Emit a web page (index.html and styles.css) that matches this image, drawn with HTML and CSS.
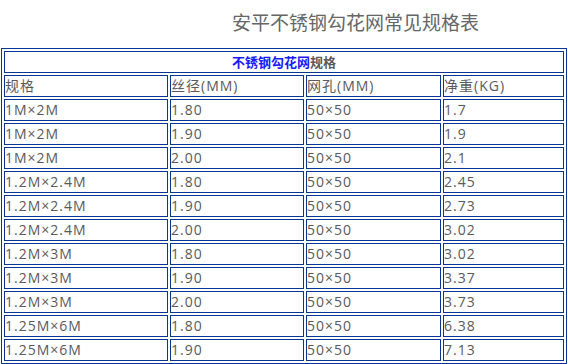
FILE: index.html
```html
<!DOCTYPE html>
<html lang="zh-CN">
<head>
<meta charset="utf-8">
<title>安平不锈钢勾花网常见规格表</title>
<link rel="stylesheet" href="styles.css">
</head>
<body>
<h1 class="title">安平不锈钢勾花网常见规格表</h1>
<table class="spec">
  <tr>
    <td class="caption" colspan="4"><span class="blue">不锈钢勾花网</span>规格</td>
  </tr>
  <tr>
    <td class="c1">规格</td>
    <td class="c2">丝径(MM)</td>
    <td class="c3">网孔(MM)</td>
    <td class="c4">净重(KG)</td>
  </tr>
  <tr><td>1M×2M</td><td>1.80</td><td>50×50</td><td>1.7</td></tr>
  <tr><td>1M×2M</td><td>1.90</td><td>50×50</td><td>1.9</td></tr>
  <tr><td>1M×2M</td><td>2.00</td><td>50×50</td><td>2.1</td></tr>
  <tr><td>1.2M×2.4M</td><td>1.80</td><td>50×50</td><td>2.45</td></tr>
  <tr><td>1.2M×2.4M</td><td>1.90</td><td>50×50</td><td>2.73</td></tr>
  <tr><td>1.2M×2.4M</td><td>2.00</td><td>50×50</td><td>3.02</td></tr>
  <tr><td>1.2M×3M</td><td>1.80</td><td>50×50</td><td>3.02</td></tr>
  <tr><td>1.2M×3M</td><td>1.90</td><td>50×50</td><td>3.37</td></tr>
  <tr><td>1.2M×3M</td><td>2.00</td><td>50×50</td><td>3.73</td></tr>
  <tr><td>1.25M×6M</td><td>1.80</td><td>50×50</td><td>6.38</td></tr>
  <tr><td>1.25M×6M</td><td>1.90</td><td>50×50</td><td>7.13</td></tr>
</table>
</body>
</html>
```
FILE: styles.css
```css
html, body {
  margin: 0;
  padding: 0;
  background: #ffffff;
}
body {
  font-family: "Open Sans", "Noto Sans CJK SC", sans-serif;
  color: #555555;
}
.title {
  margin: 0;
  height: 48px;
  padding-left: 232px;
  font-family: "Noto Sans CJK SC", sans-serif;
  font-size: 19px;
  font-weight: normal;
  line-height: 44px;
  color: #666666;
}
.spec {
  margin-left: 1px;
  width: 566px;
  border: 1px solid #0a3590;
  border-collapse: separate;
  border-spacing: 2px;
  font-size: 14px;
}
.spec td {
  border: 1px solid #0a3590;
  padding: 0;
  height: 20px;
  line-height: 20px;
  white-space: nowrap;
  letter-spacing: 1px;
  color: #5a5a5a;
}
.spec .caption {
  text-align: center;
  font-weight: bold;
  font-size: 13px;
  letter-spacing: 0;
  font-family: "Noto Sans CJK SC", sans-serif;
}
.blue {
  color: #1a1aff;
}
.c1 { width: 162px; }
.c2 { width: 132px; }
.c3 { width: 133px; }
```
